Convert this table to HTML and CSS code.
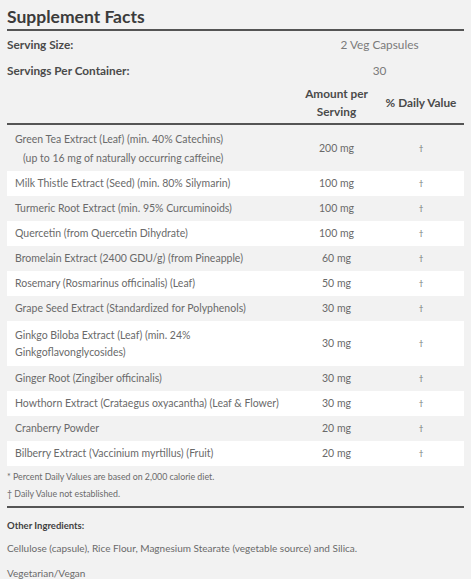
FILE: index.html
```html
<!DOCTYPE html>
<html lang="en">
<head>
<meta charset="utf-8">
<title>Supplement Facts</title>
<link rel="stylesheet" href="styles.css">
</head>
<body>
<div class="facts">
  <h1 class="title">Supplement Facts</h1>
  <div class="serving">
    <div class="srow"><span class="label">Serving Size:</span><span class="value">2 Veg Capsules</span></div>
    <div class="srow"><span class="label">Servings Per Container:</span><span class="value">30</span></div>
  </div>
  <div class="head">
    <span></span>
    <span class="hcol">Amount per<br>Serving</span>
    <span class="hcol">% Daily Value</span>
  </div>
  <div class="rows">
    <div class="row double"><div class="name">Green Tea Extract (Leaf) (min. 40% Catechins)<span class="sub">(up to 16 mg of naturally occurring caffeine)</span></div><div class="amt">200 mg</div><div class="dv">†</div></div>
    <div class="row"><div class="name">Milk Thistle Extract (Seed) (min. 80% Silymarin)</div><div class="amt">100 mg</div><div class="dv">†</div></div>
    <div class="row"><div class="name">Turmeric Root Extract (min. 95% Curcuminoids)</div><div class="amt">100 mg</div><div class="dv">†</div></div>
    <div class="row"><div class="name">Quercetin (from Quercetin Dihydrate)</div><div class="amt">100 mg</div><div class="dv">†</div></div>
    <div class="row"><div class="name">Bromelain Extract (2400 GDU/g) (from Pineapple)</div><div class="amt">60 mg</div><div class="dv">†</div></div>
    <div class="row"><div class="name">Rosemary (Rosmarinus officinalis) (Leaf)</div><div class="amt">50 mg</div><div class="dv">†</div></div>
    <div class="row"><div class="name">Grape Seed Extract (Standardized for Polyphenols)</div><div class="amt">30 mg</div><div class="dv">†</div></div>
    <div class="row double"><div class="name">Ginkgo Biloba Extract (Leaf) (min. 24%<br>Ginkgoflavonglycosides)</div><div class="amt">30 mg</div><div class="dv">†</div></div>
    <div class="row"><div class="name">Ginger Root (Zingiber officinalis)</div><div class="amt">30 mg</div><div class="dv">†</div></div>
    <div class="row"><div class="name">Howthorn Extract (Crataegus oxyacantha) (Leaf &amp; Flower)</div><div class="amt">30 mg</div><div class="dv">†</div></div>
    <div class="row"><div class="name">Cranberry Powder</div><div class="amt">20 mg</div><div class="dv">†</div></div>
    <div class="row"><div class="name">Bilberry Extract (Vaccinium myrtillus) (Fruit)</div><div class="amt">20 mg</div><div class="dv">†</div></div>
  </div>
  <div class="notes">
    <p>* Percent Daily Values are based on 2,000 calorie diet.</p>
    <p>† Daily Value not established.</p>
  </div>
  <div class="other">
    <p class="other-title">Other Ingredients:</p>
    <p>Cellulose (capsule), Rice Flour, Magnesium Stearate (vegetable source) and Silica.</p>
    <p>Vegetarian/Vegan</p>
  </div>
</div>
</body>
</html>
```

FILE: styles.css
```css
html, body {
  margin: 0;
  padding: 0;
  background: #f2f2f2;
}

body {
  font-family: Lato, "Open Sans", "Liberation Sans", sans-serif;
  color: #6a6a6a;
}

.facts {
  padding: 4px 7px 0 7px;
}

.title {
  margin: 0;
  font-family: Lato, "Open Sans", sans-serif;
  font-weight: 700;
  font-size: 17.5px;
  line-height: 25px;
  color: #3b3b3b;
  border-bottom: 2px solid #555;
}

.srow {
  display: grid;
  grid-template-columns: 288px 1fr;
  align-items: center;
  height: 26px;
}

.label {
  font-size: 11.8px;
  font-weight: 700;
  color: #4a4a4a;
}

.value {
  font-size: 11.8px;
  color: #7a7a7a;
  text-align: center;
}

.head {
  display: grid;
  grid-template-columns: 288px 83px 1fr;
  align-items: center;
  height: 40px;
  border-bottom: 2px solid #555;
}

.hcol {
  font-size: 11.8px;
  font-weight: 700;
  line-height: 18px;
  color: #4a4a4a;
  text-align: center;
}

.rows {
  padding-top: 1px;
}

.row {
  display: grid;
  grid-template-columns: 288px 83px 1fr;
  align-items: center;
  height: 25px;
  font-size: 10.5px;
  line-height: 17px;
}

.row.double {
  height: 45px;
}

.row:nth-child(even) {
  background: #ffffff;
}

.name {
  padding-left: 8px;
}

.sub {
  display: block;
  padding-left: 8px;
  margin-top: 2px;
}

.amt {
  text-align: center;
}

.dv {
  text-align: center;
  font-size: 8px;
}

.notes {
  padding-top: 2px;
  padding-bottom: 4px;
  border-bottom: 2px solid #555;
}

.notes p {
  margin: 0;
  font-size: 8.8px;
  line-height: 17px;
}

.other {
  padding-top: 10px;
}

.other p {
  margin: 0 0 9px 0;
  font-size: 10px;
  line-height: 16px;
}

.other .other-title {
  font-size: 9.5px;
  font-weight: 700;
  color: #3f3f3f;
  margin-bottom: 6px;
}
```
